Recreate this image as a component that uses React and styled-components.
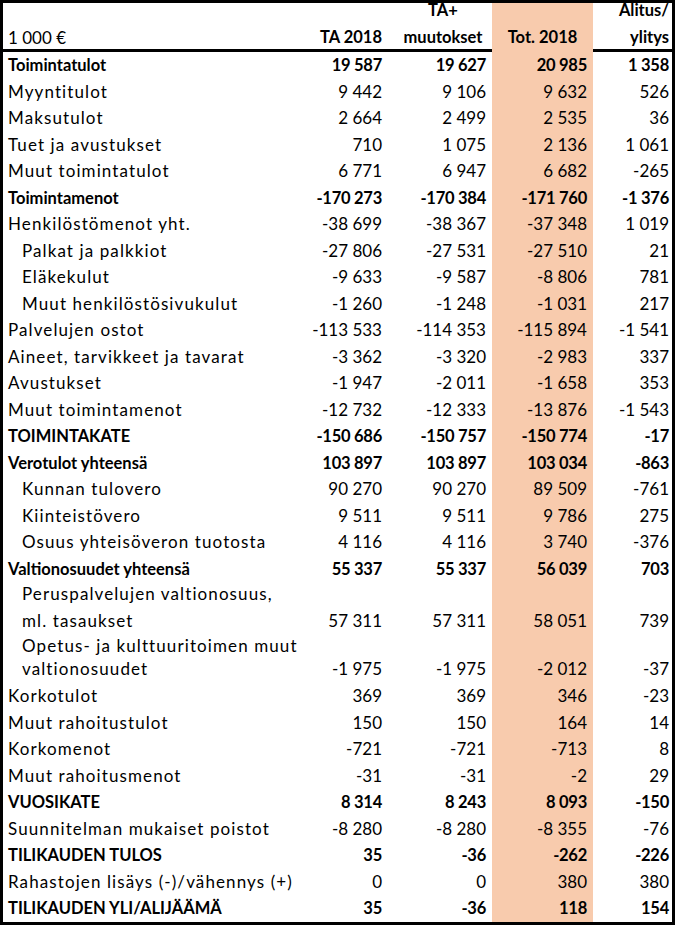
import React from 'react'
import styled, {createGlobalStyle} from 'styled-components'

const GlobalStyle = createGlobalStyle`
    html, body {
        margin: 0;
        padding: 0;
        background: #fff;
    }
    body {
        font-family: Lato, "Open Sans", "Liberation Sans", sans-serif;
        color: #000;
    }
`

const COLS = '282px 103px 104px 101px 79px'
const PEACH = '#f8cbad'

const Sheet = styled.div`
    width: 669px;
    border: 3px solid #000;
    font-size: 16px;
`

const HeaderRow = styled.div`
    display: grid;
    grid-template-columns: ${COLS};
    grid-template-rows: 46px;
    border-bottom: 3px solid #000;
`

const HeadCell = styled.div`
    display: flex;
    flex-direction: column;
    justify-content: flex-end;
    align-items: ${p => (p.$align === 'center' ? 'center' : p.$align === 'left' ? 'flex-start' : 'flex-end')};
    min-height: 0;
    padding: 0 ${p => p.$pr ?? 6}px 1px ${p => p.$pl || 0}px;
    margin-bottom: -3px;
    line-height: 27px;
    font-size: ${p => (p.$bold ? 16.5 : 17)}px;
    font-weight: ${p => (p.$bold ? 700 : 400)};
    letter-spacing: 0;
    background: ${p => (p.$hl ? PEACH : 'transparent')};
    white-space: nowrap;
`

const Row = styled.div`
    display: grid;
    grid-template-columns: ${COLS};
    grid-template-rows: ${p => p.$h || 26.5}px;
    font-weight: ${p => (p.$bold ? 700 : 400)};
    font-size: ${p => (p.$bold ? 16.5 : 17)}px;
`

const Label = styled.div`
    display: flex;
    flex-direction: column;
    justify-content: flex-end;
    padding: 0 0 ${p => p.$pb || 0}px ${p => (p.$indent ? 19 : 5)}px;
    line-height: ${p => p.$lh || 26.5}px;
    letter-spacing: ${p => (p.$bold ? 0 : 1.1)}px;
    white-space: nowrap;
`

const Num = styled.div`
    display: flex;
    align-items: flex-end;
    justify-content: flex-end;
    padding: 0 ${p => p.$pr}px ${p => p.$pb || 0}px 0;
    line-height: ${p => p.$lh || 26.5}px;
    letter-spacing: ${p => (p.$bold ? -0.25 : 0)}px;
    background: ${p => (p.$hl ? PEACH : 'transparent')};
    white-space: nowrap;
`

const rows = [
    {label: 'Toimintatulot', v: ['19 587', '19 627', '20 985', '1 358'], bold: true},
    {label: 'Myyntitulot', v: ['9 442', '9 106', '9 632', '526']},
    {label: 'Maksutulot', v: ['2 664', '2 499', '2 535', '36']},
    {label: 'Tuet ja avustukset', v: ['710', '1 075', '2 136', '1 061']},
    {label: 'Muut toimintatulot', v: ['6 771', '6 947', '6 682', '-265']},
    {label: 'Toimintamenot', v: ['-170 273', '-170 384', '-171 760', '-1 376'], bold: true},
    {label: 'Henkilöstömenot yht.', v: ['-38 699', '-38 367', '-37 348', '1 019']},
    {label: 'Palkat ja palkkiot', v: ['-27 806', '-27 531', '-27 510', '21'], indent: true},
    {label: 'Eläkekulut', v: ['-9 633', '-9 587', '-8 806', '781'], indent: true},
    {label: 'Muut henkilöstösivukulut', v: ['-1 260', '-1 248', '-1 031', '217'], indent: true},
    {label: 'Palvelujen ostot', v: ['-113 533', '-114 353', '-115 894', '-1 541']},
    {label: 'Aineet, tarvikkeet ja tavarat', v: ['-3 362', '-3 320', '-2 983', '337']},
    {label: 'Avustukset', v: ['-1 947', '-2 011', '-1 658', '353']},
    {label: 'Muut toimintamenot', v: ['-12 732', '-12 333', '-13 876', '-1 543']},
    {label: 'TOIMINTAKATE', v: ['-150 686', '-150 757', '-150 774', '-17'], bold: true},
    {label: 'Verotulot yhteensä', v: ['103 897', '103 897', '103 034', '-863'], bold: true},
    {label: 'Kunnan tulovero', v: ['90 270', '90 270', '89 509', '-761'], indent: true},
    {label: 'Kiinteistövero', v: ['9 511', '9 511', '9 786', '275'], indent: true},
    {label: 'Osuus yhteisöveron tuotosta', v: ['4 116', '4 116', '3 740', '-376'], indent: true},
    {label: 'Valtionosuudet yhteensä', v: ['55 337', '55 337', '56 039', '703'], bold: true},
    {
        label: ['Peruspalvelujen valtionosuus,', 'ml. tasaukset'],
        v: ['57 311', '57 311', '58 051', '739'],
        indent: true,
        h: 52
    },
    {
        label: ['Opetus- ja kulttuuritoimen muut', 'valtionosuudet'],
        v: ['-1 975', '-1 975', '-2 012', '-37'],
        indent: true,
        h: 49,
        lh: 23,
        pb: 3.5
    },
    {label: 'Korkotulot', v: ['369', '369', '346', '-23']},
    {label: 'Muut rahoitustulot', v: ['150', '150', '164', '14']},
    {label: 'Korkomenot', v: ['-721', '-721', '-713', '8']},
    {label: 'Muut rahoitusmenot', v: ['-31', '-31', '-2', '29']},
    {label: 'VUOSIKATE', v: ['8 314', '8 243', '8 093', '-150'], bold: true},
    {label: 'Suunnitelman mukaiset poistot', v: ['-8 280', '-8 280', '-8 355', '-76']},
    {label: 'TILIKAUDEN TULOS', v: ['35', '-36', '-262', '-226'], bold: true},
    {label: 'Rahastojen lisäys (-)/vähennys (+)', v: ['0', '0', '380', '380']},
    {label: 'TILIKAUDEN YLI/ALIJÄÄMÄ', v: ['35', '-36', '118', '154'], bold: true}
]

const PR = [6, 6, 6, 3]

const App = () =>
    <>
        <GlobalStyle />
        <Sheet>
            <HeaderRow>
                <HeadCell $align="left" $pl={5}>1 000 €</HeadCell>
                <HeadCell $bold>TA 2018</HeadCell>
                <HeadCell $bold $align="center" $pr={0} $pl={6}>
                    <span>TA+</span>
                    <span>muutokset</span>
                </HeadCell>
                <HeadCell $bold $hl $align="center" $pr={0}>Tot. 2018</HeadCell>
                <HeadCell $bold $pr={3}>
                    <span>Alitus/</span>
                    <span>ylitys</span>
                </HeadCell>
            </HeaderRow>
            {rows.map((r, i) =>
                <Row key={i} $h={r.h} $bold={r.bold}>
                    <Label $indent={r.indent} $bold={r.bold} $lh={r.lh} $pb={r.pb}>
                        {Array.isArray(r.label) ? r.label.map(t => <span key={t}>{t}</span>) : r.label}
                    </Label>
                    {r.v.map((val, j) =>
                        <Num key={j} $hl={j === 2} $bold={r.bold} $pr={PR[j]} $lh={r.lh} $pb={r.pb}>
                            {val}
                        </Num>
                    )}
                </Row>
            )}
        </Sheet>
    </>

export default App
